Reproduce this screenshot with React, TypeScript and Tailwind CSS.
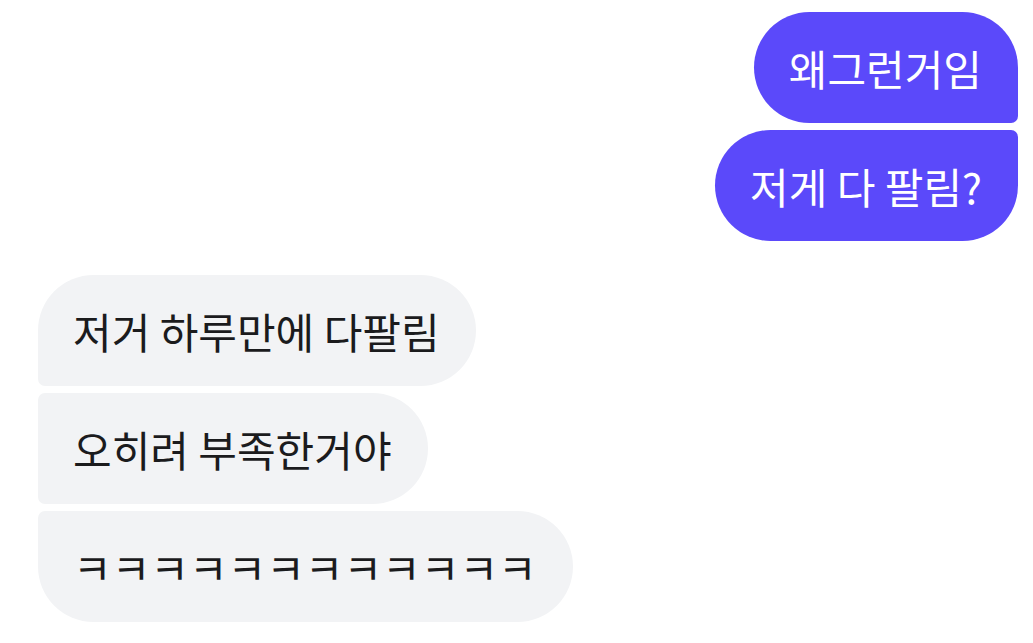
const font = {
  fontFamily: '"Noto Sans CJK KR", "Noto Sans", sans-serif',
};

type Msg = { text: string; corner: string };

const mine: Msg[] = [
  { text: "왜그런거임", corner: "rounded-[56px] rounded-br-[7px]" },
  { text: "저게 다 팔림?", corner: "rounded-[56px] rounded-tr-[7px]" },
];

const theirs: Msg[] = [
  { text: "저거 하루만에 다팔림", corner: "rounded-[56px] rounded-bl-[7px]" },
  { text: "오히려 부족한거야", corner: "rounded-[56px] rounded-l-[7px]" },
  { text: "ㅋㅋㅋㅋㅋㅋㅋㅋㅋㅋㅋㅋ", corner: "rounded-[56px] rounded-tl-[7px]" },
];

function Bubble({ msg, own }: { msg: Msg; own?: boolean }) {
  return (
    <div
      className={
        "flex h-[111px] items-center pl-[35px] pr-[36px] text-[42px] " +
        msg.corner +
        (own ? " bg-[#5b49fa] text-white" : " bg-[#f2f3f5] text-[#1b1b1d]")
      }
    >
      <span className="whitespace-nowrap leading-none">{msg.text}</span>
    </div>
  );
}

export default function App() {
  return (
    <div className="flex min-h-[643px] w-[1033px] flex-col bg-white pt-[12px]" style={font}>
      <div className="flex flex-col items-end gap-[7px] pr-[15px]">
        {mine.map((m) => (
          <Bubble key={m.text} msg={m} own />
        ))}
      </div>
      <div className="mt-[34px] flex flex-col items-start gap-[7px] pl-[38px]">
        {theirs.map((m) => (
          <Bubble key={m.text} msg={m} />
        ))}
      </div>
    </div>
  );
}
